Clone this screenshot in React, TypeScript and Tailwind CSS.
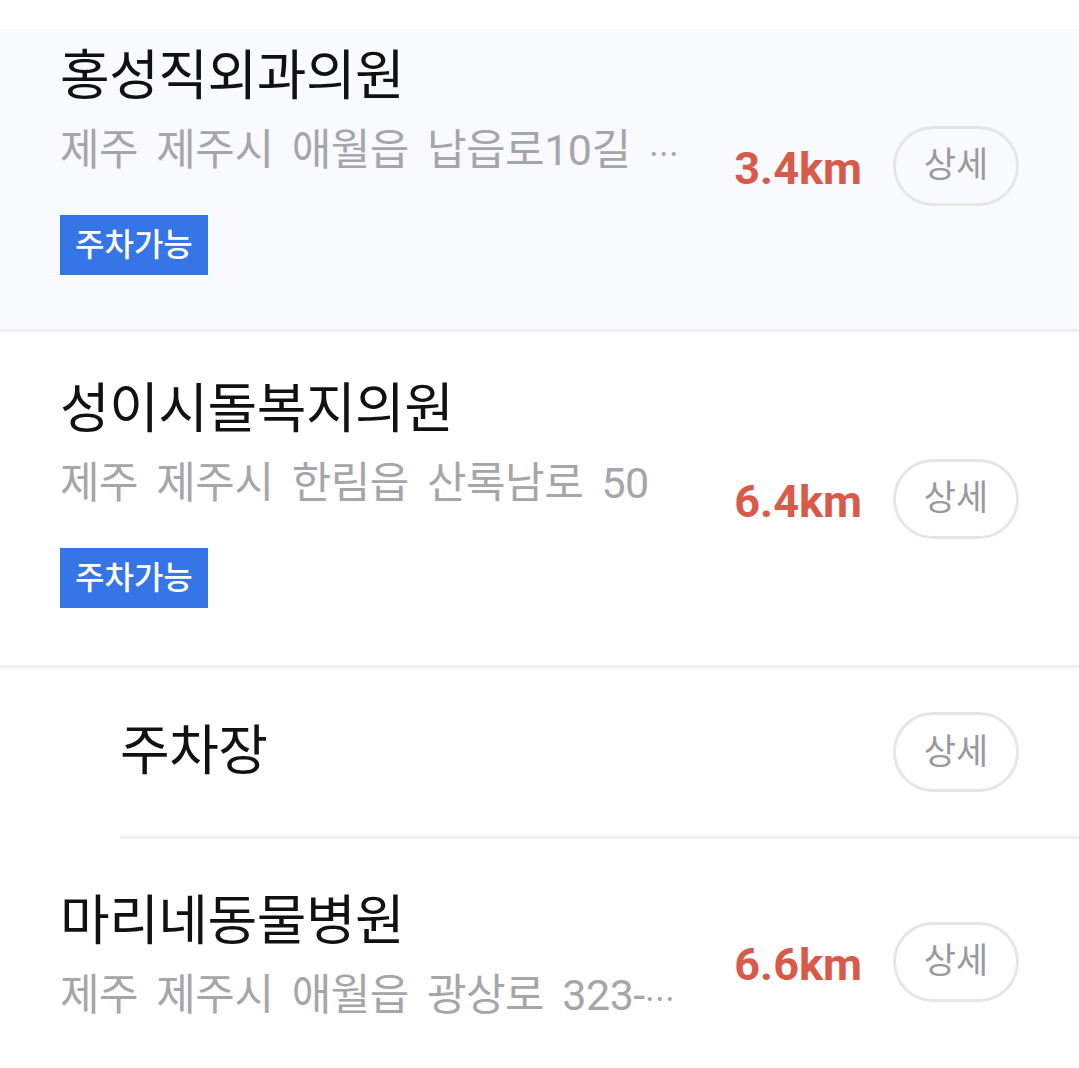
import React from "react";

type Place = {
  name: string;
  address?: string;
  cut?: boolean;
  distance?: string;
  parking?: boolean;
  indent?: boolean;
};

const font = "font-['Roboto','Noto_Sans_CJK_KR',sans-serif]";

const DetailButton: React.FC = () => (
  <button className="flex h-[80px] w-[126px] shrink-0 items-center justify-center rounded-full border-[3px] border-[#e6e6e6] bg-transparent text-[35px] leading-none text-[#9a9a9e]">
    상세
  </button>
);

const PlaceRow: React.FC<{ place: Place; className?: string }> = ({ place, className }) => (
  <div className={`flex items-center pr-[60px] ${place.indent ? "pl-[120px]" : "pl-[60px]"} ${className ?? ""}`}>
    <div className="min-w-0 flex-1">
      <div className="text-[54px] leading-[66px] tracking-[-0.5px] text-[#111111]">{place.name}</div>
      {place.address && (
        <div className="mt-[13px] h-[54px] overflow-hidden whitespace-nowrap text-[43px] leading-[54px] tracking-[-0.5px] [word-spacing:8px] text-[#a6a6aa]">
          {place.address}
          {place.cut && (
            <span className="font-['Noto_Sans_CJK_KR',sans-serif] text-[30px] leading-none tracking-[-2px]">⋯</span>
          )}
        </div>
      )}
      {place.parking && (
        <div className="mt-[38px] inline-flex h-[60px] items-center bg-[#3575e5] px-[15px] text-[32px] font-medium text-white">
          주차가능
        </div>
      )}
    </div>
    {place.distance && (
      <div className={`ml-[32px] shrink-0 text-[45px] font-bold leading-none text-[#d85a4a] ${place.address ? "mt-[18px]" : ""}`}>
        {place.distance}
      </div>
    )}
    <div className={`ml-[31px] ${place.address ? "mt-[12px]" : ""}`}>
      <DetailButton />
    </div>
  </div>
);

export default function App() {
  return (
    <div className={`min-h-[1068px] w-full overflow-hidden bg-white ${font}`}>
      <div className="h-[29px] bg-white" />
      <div className="overflow-hidden">
        <PlaceRow
          className="-mt-[30px] bg-[#f9fafe] pb-[54px] pt-[45px]"
          place={{ name: "홍성직외과의원", address: "제주 제주시 애월읍 납읍로10길 ", cut: true, distance: "3.4km", parking: true }}
        />
      </div>
      <div className="h-[3px] bg-[#efefef]" />
      <PlaceRow
        className="pb-[57px] pt-[45px]"
        place={{ name: "성이시돌복지의원", address: "제주 제주시 한림읍 산록남로 50", distance: "6.4km", parking: true }}
      />
      <div className="h-[3px] bg-[#f0f0f0]" />
      <PlaceRow className="h-[168px]" place={{ name: "주차장", indent: true }} />
      <div className="ml-[120px] h-[3px] bg-[#f0f0f0]" />
      <PlaceRow
        className="pb-[59px] pt-[50px]"
        place={{ name: "마리네동물병원", address: "제주 제주시 애월읍 광상로 323-", cut: true, distance: "6.6km" }}
      />
    </div>
  );
}
